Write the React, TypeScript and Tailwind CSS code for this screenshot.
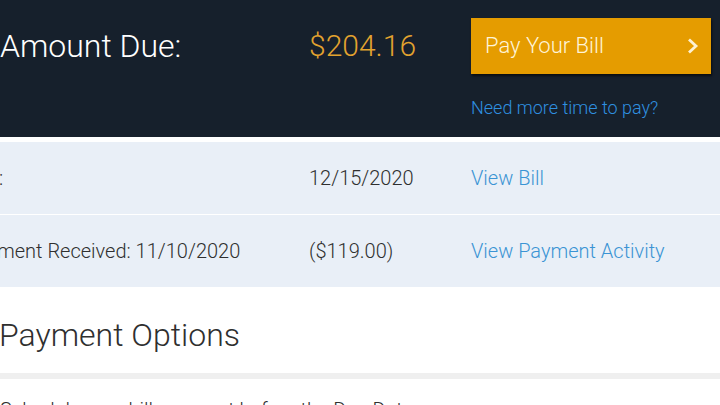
import React from "react";

const font = { fontFamily: "Roboto, 'Noto Sans', sans-serif" };

export default function App() {
  return (
    <div className="w-[720px] h-[405px] overflow-hidden bg-white" style={font}>
      <div className="ml-[-78px] w-[798px]">
        {/* Header */}
        <div className="bg-[#16202c] h-[137px] pt-[18px]">
          <div className="grid grid-cols-[387px_162px_240px] items-center h-[56px]">
            <div className="text-[32px] font-light text-white whitespace-nowrap leading-none">
              Total Amount Due:
            </div>
            <div className="text-[30px] font-light text-[#e2a32f] leading-none">$204.16</div>
            <button className="h-[56px] w-[240px] bg-[#e59c00] flex items-center justify-between pl-[14px] pr-[12px] shadow-[1px_2px_2px_rgba(0,0,0,0.6)]">
              <span className="text-[22px] font-light text-[#fff4d8] leading-none">Pay Your Bill</span>
              <svg width="12" height="18" viewBox="0 0 12 18" fill="none">
                <path d="M2 2.5 L9 9 L2 15.5" stroke="#fdf1d3" strokeWidth="2.8" strokeLinejoin="miter" />
              </svg>
            </button>
          </div>
          <div className="grid grid-cols-[387px_162px_240px] mt-[25px]">
            <div />
            <div />
            <a className="text-[18px] font-light text-[#2f90e0] leading-none whitespace-nowrap">Need more time to pay?</a>
          </div>
        </div>

        {/* Summary rows */}
        <div className="mt-[5px]">
          <div className="grid grid-cols-[387px_162px_auto] items-center h-[72px] bg-[#e9eff7] text-[20px] font-light text-[#2f2f2f]">
            <div className="whitespace-nowrap ml-[-3px]">Due Date:</div>
            <div>12/15/2020</div>
            <a className="text-[#3b94d4] whitespace-nowrap">View Bill</a>
          </div>
          <div className="h-[1px] bg-white" />
          <div className="grid grid-cols-[387px_162px_auto] items-center h-[72px] bg-[#e9eff7] text-[20px] font-light text-[#2f2f2f]">
            <div className="whitespace-nowrap">Last Payment Received: 11/10/2020</div>
            <div>($119.00)</div>
            <a className="text-[#3b94d4] whitespace-nowrap">View Payment Activity</a>
          </div>
        </div>
      </div>

      {/* Payment options */}
      <div className="pt-[32px] pb-[21px]">
        <h2 className="text-[32px] font-light text-[#2f2f2f] leading-none ml-[-1px]">Payment Options</h2>
      </div>
      <div className="h-[6px] bg-[#efefef] mt-[1px]" />
      <div className="pt-[21px] text-[20px] font-light text-[#2f2f2f] whitespace-nowrap leading-none">
        Schedule your bill payment before the Due Date
      </div>
    </div>
  );
}
